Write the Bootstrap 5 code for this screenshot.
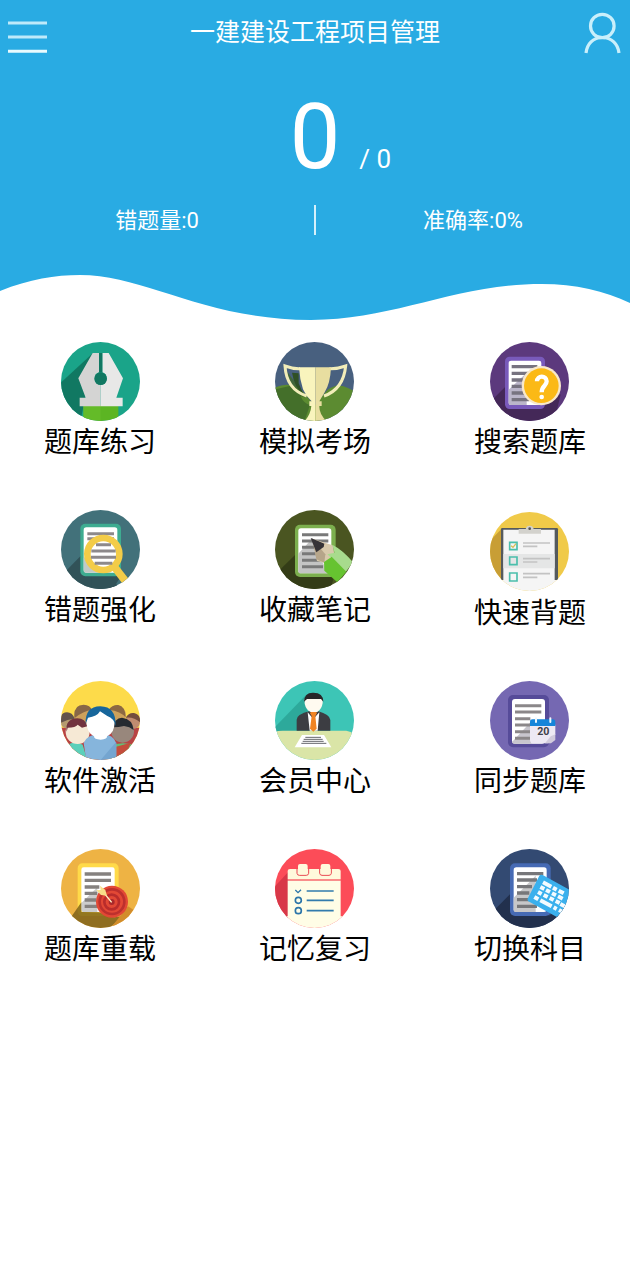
<!DOCTYPE html>
<html lang="zh-CN">
<head>
<meta charset="utf-8">
<meta name="viewport" content="width=device-width, initial-scale=1">
<title>一建建设工程项目管理</title>
<link href="https://cdn.jsdelivr.net/npm/bootstrap@5.3.0/dist/css/bootstrap.min.css" rel="stylesheet">
<style>
  body { font-family: Roboto, "Noto Sans CJK SC", sans-serif; background: #fff; color: #000; }
  .hero { background: #29abe3; color: #fff; }
  .topbar { height: 64px; padding: 0 8px; }
  .page-title { font-size: 25px; line-height: 66px; }
  .bar-btn { border: 0; background: none; padding: 0; width: 40px; height: 64px; }
  .bar-btn svg { display: block; }
  .score { display: grid; grid-template-columns: 1fr auto 1fr; align-items: baseline; padding-top: 20px; }
  .score-now { grid-column: 2; font-size: 90px; line-height: 108px; }
  .score-all { font-size: 26px; padding-left: 19px; }
  .stats { font-size: 22px; line-height: 32px; padding: 13px 0 38px; }
  .stats .rule { width: 2px; height: 30px; background: #d5f0fb; }
  .wave { display: block; width: 100%; height: 46px; fill: #29abe3; }
  .menu { display: grid; grid-template-columns: repeat(3, auto); justify-content: space-between; row-gap: 45px; padding: 21px 7%; }
  .menu a { color: #000; text-decoration: none; text-align: center; font-size: 28px; line-height: 44px; }
  .menu svg { display: block; width: 79px; height: 79px; margin: 0 auto; border-radius: 50%; overflow: hidden; }
  .menu .lowered { margin-top: 2px; margin-bottom: 1px; }
</style>
</head>
<body>
<header>
  <div class="hero">
    <div class="topbar d-flex justify-content-between">
      <button class="bar-btn" type="button" aria-label="菜单">
        <svg width="40" height="64" viewBox="0 0 40 64" fill="none" stroke-width="3"><path d="M0 23h39M0 37h39" stroke="#bfeafa"/><path d="M0 51.300h39" stroke="#e9fafe"/></svg>
      </button>
      <h1 class="page-title fw-normal m-0">一建建设工程项目管理</h1>
      <button class="bar-btn" type="button" aria-label="我的">
        <svg width="40" height="64" viewBox="0 0 40 64" fill="none" stroke="#c9effb" stroke-width="3.200"><ellipse cx="20.300" cy="26" rx="11.800" ry="11.700"/><path d="M4 53C5 44 11 37.500 20.300 37.500S36 44 37 53"/></svg>
      </button>
    </div>
    <div class="score">
      <span class="score-now">0</span>
      <span class="score-all">/ 0</span>
    </div>
    <div class="stats d-flex text-center">
      <div class="flex-fill w-50">错题量:0</div>
      <div class="rule flex-shrink-0"></div>
      <div class="flex-fill w-50">准确率:0%</div>
    </div>
  </div>
  <svg class="wave" viewBox="0 0 630 46" preserveAspectRatio="none" aria-hidden="true"><path d="M0-1V16C30 4 55 0 80 0C145 0 205 45 311 45C395 45 455 9 542 9C575 9 605 16 630 28V-1Z"/></svg>
</header>

<main>
<nav class="menu" aria-label="功能">
  <a href="#practice">
    <svg viewBox="31 18 237 237" aria-hidden="true">
      <path fill="#1aa489" d="M31 18h237v237H31z"/>
      <path fill="#117862" d="M127 51L20 150V230L88 260L100 205Z"/>
      <path fill="#5cb523" d="M98 207h105v50H98z"/><path fill="#6cc22e" d="M98 207h52v50H98z" opacity=".5"/>
      <path fill="#d4d4d3" d="M126 51h19v58a19 19 0 0 0 5 37V211H87V185H105L83 127Z"/>
      <path fill="#e8e8e7" d="M174 51h-19v58a19 19 0 0 1-5 37V211H216V185H197L217 127Z"/>
      <path fill="#117862" d="M145 51h10v58h-10z"/><circle cx="150" cy="128" r="19" fill="#117862"/>
    </svg>题库练习</a>
  <a href="#exam">
    <svg viewBox="33 18 237 237" aria-hidden="true">
      <path fill="#48607f" d="M33 18h237v237H33z"/>
      <path fill="#5c8b31" d="M25 158Q75 132 112 162L152 209L190 162Q220 138 252 156L280 170V260H25Z"/>
      <path fill="#3f6829" d="M68 105L128 185L110 181Q120 204 138 207L120 260L80 242Q35 180 35 160L80 149Z" opacity=".8"/>
      <path fill="#2f5026" d="M84 110L104 112V142L119 176Q92 157 84 110Z"/>
      <g fill="none" stroke="#f2edb9" stroke-width="9"><path d="M108 98Q88 99 63 90Q67 160 128 180M196 98Q220 99 245 90Q238 160 180 180"/></g>
      <path fill="#f9f4bd" d="M105 94H154V257H121Q140 235 142 210H136V196H143Q126 181 117 160Q107 130 105 94Z"/>
      <path fill="#e8dea0" d="M154 94H201Q199 142 182 169L166 196H173V210H166Q165 235 190 257H154Z"/>
    </svg>模拟考场</a>
  <a href="#search">
    <svg viewBox="33 18 237 237" aria-hidden="true">
      <path fill="#5c397d" d="M33 18h237v237H33z"/>
      <path fill="#442858" d="M30 201L82 149L183 210L245 175L225 260H60Z"/>
      <rect x="78" y="62" width="120" height="157" rx="14" fill="#795abb"/>
      <rect x="89" y="74" width="98" height="133" rx="7" fill="#fff"/>
      <path fill="#bbb6ca" d="M89 161L143 110V207H95Q89 207 89 200Z"/>
      <path stroke="#777380" stroke-width="10" d="M98 92h77M98 112h62M98 132h42M98 151h42M98 171h46M98 191h53"/>
      <circle cx="187" cy="149" r="59" fill="#f8e8ca"/><circle cx="187" cy="149" r="52" fill="#fbb916"/>
      <path fill="none" stroke="#fff" stroke-width="13" d="M174 136C174 117 203 118 203 136C203 150 188 149 188 169"/><circle cx="188" cy="183" r="7" fill="#fff"/>
    </svg>搜索题库</a>

  <a href="#mistakes">
    <svg viewBox="31 18 237 237" aria-hidden="true">
      <path fill="#42717a" d="M31 18h237v237H31z"/>
      <path fill="#315258" d="M31 216L92 154L210 218L183 260H60Z"/><path fill="#315258" d="M123 216L168 202L212 260H123Z"/>
      <rect x="89" y="59" width="122" height="158" rx="15" fill="#3eac91"/>
      <rect x="99" y="70" width="101" height="136" rx="8" fill="#fff"/>
      <path fill="#c2cac7" d="M99 163L125 137L180 206H107Q99 206 99 198Z"/>
      <path stroke="#8d898b" stroke-width="9" d="M110 89h80M110 104h80"/>
      <path stroke="#f3cc48" stroke-width="23" d="M190 187L225 232"/>
      <circle cx="158" cy="150" r="48" fill="#fff" stroke="#f3cc48" stroke-width="20"/>
      <path stroke="#8d898b" stroke-width="9" d="M136 122h45M122 141h73M121 160h75M132 178h53"/>
    </svg>错题强化</a>
  <a href="#notes">
    <svg viewBox="33 18 237 237" aria-hidden="true">
      <path fill="#4a5521" d="M33 18h237v237H33z"/>
      <path fill="#343c17" d="M40 205L97 149L210 218L198 260H70Z"/>
      <rect x="93" y="62" width="122" height="157" rx="15" fill="#7caf4e"/>
      <rect x="103" y="73" width="99" height="135" rx="8" fill="#fff"/>
      <path fill="#c4c4c4" d="M103 149L146 102L190 208H110Q103 208 103 200Z"/>
      <path stroke="#797979" stroke-width="9" d="M114 92h79M114 111h79M114 130h45M114 149h45M114 169h60M114 188h63"/>
      <path fill="#d8c9ac" d="M145 104L206 124L211 151L181 176L159 171Z"/>
      <path fill="#b6a58a" d="M145 104L184 151L181 176L157 166Z"/>
      <path fill="#363337" d="M140 102Q163 111 181 119L179 129L157 145Z"/>
      <path fill="#a8db8d" d="M205 122Q238 139 267 175L245 204L202 162L190 151L212 146Z"/>
      <path fill="#66c330" d="M203 158L247 203L220 235L181 200L180 174Z"/>
    </svg>收藏笔记</a>
  <a href="#recite">
    <svg class="lowered" viewBox="31 25 237 237" aria-hidden="true">
      <path fill="#f0ca49" d="M31 25h237v237H31z"/>
      <path fill="#c89e35" d="M31 111L66 75V238H31Z"/>
      <path fill="#555a5d" d="M64 77Q64 73 68 73H231Q235 73 235 77V229H64Z"/>
      <path fill="#f5f5f5" d="M71 78h154v151h43v39H31v-39h40z"/><path fill="#e5e6e6" d="M71 151h154v43H71z"/>
      <path fill="#d3d2cd" d="M117 76H138Q140 66 150 66T162 76H184V90H117Z"/><circle cx="150" cy="75" r="4" fill="#555"/>
      <g fill="none" stroke="#4bbfac" stroke-width="5"><path d="M90 116h22v22H90zM90 160h22v23H90zM90 208h22v24H90z"/></g>
      <path fill="none" stroke="#d6bd56" stroke-width="4" d="M94 126l6 5 9-11"/>
      <path stroke="#c3c3c3" stroke-width="5" d="M130 118h81M130 128h43M130 165h81M130 175h43M130 210h81M130 221h43"/>
    </svg>快速背题</a>

  <a href="#activate">
    <svg viewBox="31 18 237 237" aria-hidden="true">
      <path fill="#fddb4a" d="M31 18h237v237H31z"/>
      <path fill="#b84345" d="M31 158h237v97H31z"/>
      <circle cx="51" cy="139" r="22" fill="#b59b70"/><path fill="#63534b" d="M29 137Q29 113 49 112Q65 112 72 131Q49 133 29 144Z"/>
      <circle cx="246" cy="139" r="23" fill="#c08c70"/><path fill="#744d3d" d="M225 128Q234 112 250 114Q270 118 270 144Q251 125 225 128Z"/>
      <circle cx="99" cy="120" r="28" fill="#cda15b"/><path fill="#886747" d="M71 121Q70 89 99 89Q119 90 124 105Q98 107 71 130Z"/>
      <circle cx="198" cy="120" r="28" fill="#cda15b"/><path fill="#8c6842" d="M174 104Q184 89 203 90Q224 94 225 127Q211 109 174 104Z"/>
      <path fill="#5bd0ba" d="M50 210Q70 195 96 209L110 257H45Z"/>
      <circle cx="81" cy="171" r="36" fill="#f6e9d5"/><path fill="#71333e" d="M48 170Q42 132 80 130Q104 130 110 154L94 158L81 149Q75 158 51 158Z"/>
      <path fill="#64bd76" d="M185 210Q218 199 250 210L235 257H180Z"/>
      <circle cx="216" cy="169" r="34" fill="#98877c"/><path fill="#262a30" d="M187 157Q191 130 214 128Q246 132 249 165Q237 155 220 153L204 156Z"/>
      <path fill="#c44c3c" d="M191 217L240 203L220 255H191Z"/>
      <path fill="#86b5dc" d="M99 204Q110 177 149 178Q188 176 197 205V257H107Z"/>
      <path fill="#6a9cc9" d="M150 255L197 200V257Z" opacity=".65"/>
      <path fill="#fff" d="M107 140Q105 109 149 103Q193 108 192 142Q191 176 169 184Q171 193 150 194Q130 194 130 184Q109 174 107 140Z"/>
      <path fill="#17669b" d="M105 147Q102 95 149 94Q197 95 195 153Q190 130 170 123L148 109Q139 125 112 128Z"/>
    </svg>软件激活</a>
  <a href="#member">
    <svg viewBox="33 18 237 237" aria-hidden="true">
      <path fill="#3dc5b6" d="M33 18h237v237H33z"/>
      <path fill="#2da99b" d="M33 170V156L126 60L130 110L105 168Z"/>
      <path fill="#dae5a7" d="M33 171Q40 167 56 167H247Q262 169 270 178V257H33Z"/>
      <path fill="#3c3d42" d="M98 167V134Q98 118 137 108H161Q199 119 199 135V167Z"/>
      <path fill="#fff" d="M131 112L148 132L166 112L161 167H137Z"/>
      <path fill="#f08423" d="M142 109H155L159 114L154 124L158 161L148 170L138 161L143 123L138 115Z"/>
      <path fill="#fffaf0" d="M122 73Q122 63 148 63T176 73V84Q173 103 160 111H140Q126 104 122 86Z"/>
      <path fill="#282629" d="M120 80Q121 52 148 53Q178 53 178 80L171 72H129Z"/>
      <path fill="#fff" d="M114 180H180L202 217H92Z"/>
      <path stroke="#66676b" stroke-width="3" d="M124 187h47M119 193h57M116 199h63M112 205h75"/>
    </svg>会员中心</a>
  <a href="#sync">
    <svg viewBox="33 18 237 237" aria-hidden="true">
      <path fill="#7568b2" d="M33 18h237v237H33z"/>
      <rect x="87" y="60" width="123" height="157" rx="15" fill="#564b99"/>
      <rect x="99" y="72" width="99" height="134" rx="9" fill="#fff"/>
      <path fill="#c8c6ce" d="M99 201L157 139V206H107Q99 206 99 201Z"/>
      <path stroke="#8b8789" stroke-width="9" d="M108 92h79M108 111h79M108 131h46M108 150h46M108 170h46M108 190h46"/>
      <path fill="#ede9f3" d="M153 149H229V178L208 205H161Q153 203 153 194Z"/>
      <path fill="#d1cbdc" d="M229 178V195L216 205H198L215 184Z"/>
      <path fill="#1585d9" d="M153 140Q153 133 161 133H222Q229 133 229 141V153H153Z"/>
      <path stroke="#edf7fd" stroke-width="6" stroke-linecap="round" d="M171 130v11M214 130v11"/>
      <text x="193" y="181" text-anchor="middle" font-family="Roboto" font-size="32" font-weight="700" fill="#3f4249">20</text>
    </svg>同步题库</a>

  <a href="#reload">
    <svg viewBox="31 18 237 237" aria-hidden="true">
      <path fill="#eeb344" d="M31 18h237v237H31z"/>
      <rect x="81" y="61" width="123" height="158" rx="14" fill="#ffda49"/>
      <rect x="92" y="73" width="100" height="134" rx="7" fill="#fff"/>
      <path fill="#ccc" d="M92 180L140 133V207H98Q92 207 92 200Z"/>
      <path stroke="#85817f" stroke-width="10" d="M102 93h79M102 112h79M102 132h44M102 151h38M102 171h35M102 190h42"/>
      <path fill="#755b16" d="M63 220L92 178V207L145 208L190 223L218 220L170 260H80Z" opacity=".78"/>
      <path fill="#d28d2b" d="M180 255L232 190L248 200L213 260Z"/>
      <circle cx="184" cy="176" r="48" fill="#e24835"/><circle cx="184" cy="176" r="37" fill="none" stroke="#bd302d" stroke-width="8"/><circle cx="183" cy="177" r="22" fill="none" stroke="#b92c2b" stroke-width="8"/><circle cx="183" cy="177" r="9" fill="#a9282b"/>
      <path stroke="#fff2c8" stroke-width="4" d="M155 144L183 178"/><path fill="#f8df89" d="M137 142L150 141L148 128L164 141L169 158L151 156Z"/>
    </svg>题库重载</a>
  <a href="#review">
    <svg viewBox="679 18 237 237" aria-hidden="true">
      <path fill="#fc4c58" d="M679 18h237v237H679z"/>
      <path fill="#d83848" d="M679 130L718 88V235H679Z"/>
      <path fill="#fffde6" d="M717 113H876V220H916V260H679V220H717Z"/>
      <path fill="#fff9dc" d="M717 84Q717 78 724 78H869Q876 78 876 84V109H717Z"/>
      <path stroke="#f6a39b" stroke-width="3" d="M717 111h159"/>
      <path fill="none" stroke="#e94550" stroke-width="3" d="M745 77V91Q746 97 752 97H773Q779 97 780 91V77M813 77V91Q814 97 820 97H841Q847 97 848 91V77"/>
      <rect x="748" y="63" width="29" height="31" rx="6" fill="#fff9dc"/><rect x="816" y="63" width="29" height="31" rx="6" fill="#fff9dc"/>
      <path fill="none" stroke="#2c75a9" stroke-width="4" d="M740 141l8 8 9-9"/>
      <path stroke="#327bad" stroke-width="5" d="M774 144h81M774 172h81M774 203h81"/>
      <g fill="none" stroke="#2c75a9" stroke-width="5"><circle cx="749" cy="172" r="9"/><circle cx="749" cy="203" r="9"/></g>
    </svg>记忆复习</a>
  <a href="#subject">
    <svg viewBox="33 18 237 237" aria-hidden="true">
      <path fill="#334a72" d="M33 18h237v237H33z"/>
      <path fill="#22304d" d="M40 207L93 154L210 218L270 175V257H70Z"/>
      <rect x="93" y="61" width="122" height="158" rx="15" fill="#466ab4"/>
      <rect x="104" y="73" width="99" height="134" rx="8" fill="#fff"/>
      <path fill="#c7c7c9" d="M104 164L170 98V207H112Q104 207 104 200Z"/>
      <path stroke="#77777a" stroke-width="10" d="M114 92h79M114 111h60M114 131h45M114 150h37M114 170h37M114 190h60"/>
      <path fill="#3ab0ed" d="M181 98Q184 94 191 96L275 142V216L232 221L148 175Q144 171 147 165Z"/>
      <g fill="none" stroke="#f3fbff" stroke-width="12"><path d="M192 118L217 131M222 134L233 140M239 143L254 151M184 132L196 138M201 141L213 147M219 151L231 157M237 160L251 167M177 147L188 153M194 156L206 162M212 165L224 171M230 174L242 180M166 162L178 169M184 172L218 190M224 193L233 198M244 183L260 191M240 201L257 210"/></g>
    </svg>切换科目</a>
</nav>
</main>
<script src="https://cdn.jsdelivr.net/npm/bootstrap@5.3.0/dist/js/bootstrap.bundle.min.js"></script>
</body>
</html>
